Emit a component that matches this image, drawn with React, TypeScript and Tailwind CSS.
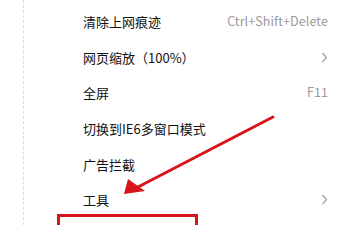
import React from "react";

type Item = { label: string; right?: string; chevron?: boolean };

const items: Item[] = [
  { label: "清除上网痕迹", right: "Ctrl+Shift+Delete" },
  { label: "网页缩放（100%）", chevron: true },
  { label: "全屏", right: "F11" },
  { label: "切换到IE6多窗口模式" },
  { label: "广告拦截" },
  { label: "工具", chevron: true },
];

function Chevron() {
  return (
    <svg width="7" height="11" viewBox="0 0 7 11" className="block">
      <path d="M1.5 1 L5.5 5.5 L1.5 10" fill="none" stroke="#a0a0a0" strokeWidth="1.2" />
    </svg>
  );
}

export default function App() {
  return (
    <div
      className="relative w-[350px] h-[225px] overflow-hidden bg-white flex"
      style={{ fontFamily: '"Noto Sans CJK SC", "Noto Sans", sans-serif' }}
    >
      <div className="w-[23px] shrink-0" />
      <div className="border-l border-dashed border-[#dcdcdc] h-full" />
      <div className="flex-1 flex flex-col pt-[3.5px] pl-[59px] pr-[22px]">
        {items.map((it) => (
          <div key={it.label} className="h-[35.7px] flex items-center justify-between">
            <span className="text-[13px] text-[#111111] leading-none">{it.label}</span>
            {it.right && (
              <span className="text-[12.5px] text-[#9a9a9a] leading-none tracking-[0.1px]">{it.right}</span>
            )}
            {it.chevron && (
              <span>
                <Chevron />
              </span>
            )}
          </div>
        ))}
      </div>
      <div className="absolute left-[57px] top-[214px] w-[141px] h-[30px] border-[3px] border-[#d7141a]" />
      <svg className="absolute left-0 top-0" width="350" height="225" viewBox="0 0 350 225">
        <line x1="273" y1="117" x2="138" y2="187" stroke="#d7141a" strokeWidth="3" strokeLinecap="round" />
        <polygon points="124,194 128,179 145,191" fill="#d7141a" />
      </svg>
    </div>
  );
}
